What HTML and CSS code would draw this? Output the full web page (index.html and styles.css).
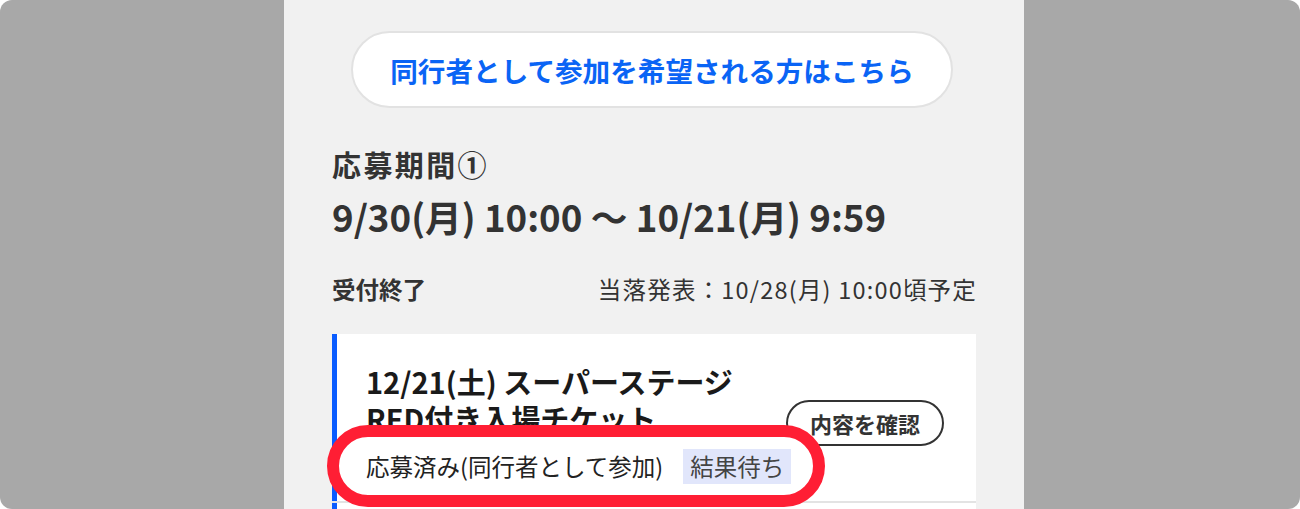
FILE: index.html
```html
<!DOCTYPE html>
<html lang="ja">
<head>
<meta charset="utf-8">
<link rel="stylesheet" href="styles.css">
</head>
<body>
<div class="frame">
  <main class="panel">
    <button class="companion-btn">同行者として参加を希望される方はこちら</button>
    <h2 class="period-title">応募期間①</h2>
    <p class="period-date">9/30(月) 10:00 〜 10/21(月) 9:59</p>
    <div class="period-meta">
      <span class="status-closed">受付終了</span>
      <span class="announce">当落発表：10/28(月) 10:00頃予定</span>
    </div>
    <div class="card-list">
      <section class="card">
        <div class="card-body">
          <h3 class="card-title">12/21(土) スーパーステージ<br>RED付き入場チケット</h3>
          <div class="entry-status">
            <span class="entry-text">応募済み(同行者として参加)</span>
            <span class="entry-badge">結果待ち</span>
          </div>
        </div>
        <button class="detail-btn">内容を確認</button>
      </section>
      <section class="card card-next"></section>
    </div>
  </main>
</div>
</body>
</html>
```
FILE: styles.css
```css
html, body {
  margin: 0;
  padding: 0;
  background: #ffffff;
  overflow: hidden;
}
body {
  font-family: "Noto Sans CJK JP", "Noto Sans", sans-serif;
  color: #333333;
}
.frame {
  width: 1300px;
  height: 509px;
  background: #a8a8a8;
  border-radius: 12px;
  overflow: hidden;
  padding-left: 284px;
  box-sizing: border-box;
}
.panel {
  display: block;
  width: 740px;
  height: 509px;
  background: #f1f1f1;
  padding: 31px 48px 0;
  box-sizing: border-box;
  overflow: hidden;
}
.companion-btn {
  display: block;
  width: 602px;
  height: 77px;
  margin: 0 0 0 19px;
  border: 2px solid #e2e2e2;
  border-radius: 40px;
  background: #ffffff;
  color: #0a64f5;
  font-family: inherit;
  font-size: 27.6px;
  font-weight: 700;
  padding: 0;
}
.period-title {
  margin: 36px 0 0;
  font-size: 29px;
  line-height: 40px;
  font-weight: 700;
  color: #333;
  letter-spacing: 2.4px;
}
.period-date {
  margin: 9px 0 0;
  font-size: 36.7px;
  line-height: 46px;
  font-weight: 700;
  color: #333;
}
.period-meta {
  margin-top: 33px;
  display: flex;
  justify-content: space-between;
  align-items: center;
  font-size: 23.5px;
  line-height: 34px;
}
.status-closed {
  font-weight: 700;
}
.announce {
  color: #333;
  font-weight: 400;
  letter-spacing: 1.2px;
  margin-right: -1px;
}
.card-list {
  margin-top: 28px;
  display: flex;
  flex-direction: column;
  gap: 2px;
  background: #e3e3e3;
}
.card {
  flex-shrink: 0;
  background: #ffffff;
  border-left: 5px solid #0a5cff;
  display: flex;
  align-items: center;
  justify-content: space-between;
  padding: 28px 32px 17px 29px;
  min-height: 167px;
  box-sizing: border-box;
}
.card-body {
  flex: 1;
  min-width: 0;
  display: flex;
  flex-direction: column;
}
.card-title {
  margin: 0;
  font-size: 29px;
  line-height: 37px;
  font-weight: 700;
  color: #1a1a1a;
}
.entry-status {
  position: relative;
  z-index: 1;
  margin-top: 12px;
  display: flex;
  align-items: center;
  gap: 20px;
  width: max-content;
  white-space: nowrap;
  font-size: 23.5px;
  line-height: 35px;
  color: #222;
}
.entry-status::before {
  content: "";
  position: absolute;
  z-index: -1;
  left: -39px;
  top: -24px;
  width: 498px;
  height: 82px;
  box-sizing: border-box;
  border: 12px solid #ff1e34;
  border-radius: 42px;
  background: #ffffff;
}
.entry-text {
  white-space: nowrap;
}
.entry-badge {
  flex-shrink: 0;
  white-space: nowrap;
  background: #e1e6fb;
  color: #444;
  padding: 0 7px;
  height: 35px;
}
.detail-btn {
  flex-shrink: 0;
  width: 158px;
  height: 46px;
  border: 2px solid #333;
  border-radius: 24px;
  background: #fff;
  color: #333;
  font-family: inherit;
  font-size: 22px;
  font-weight: 700;
  padding: 0;
}
```
